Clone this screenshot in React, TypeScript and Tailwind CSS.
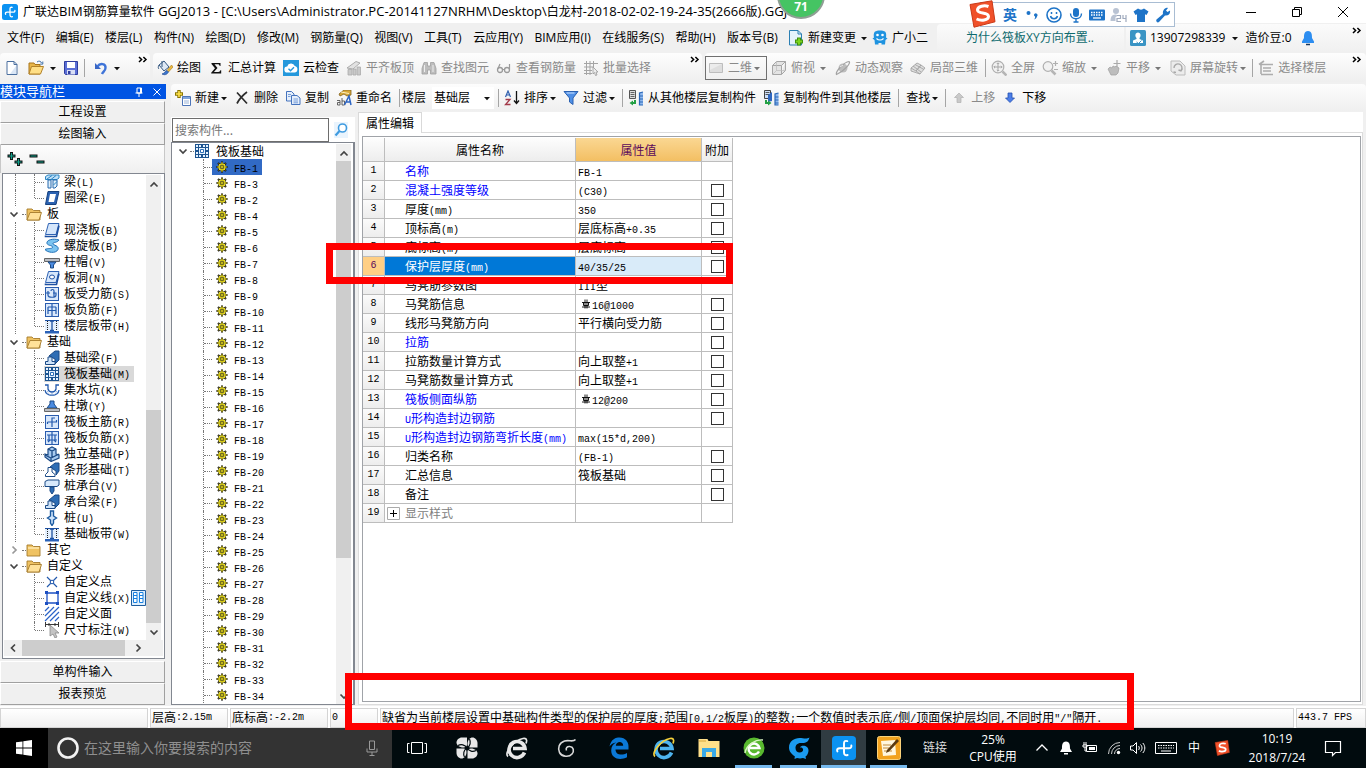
import React from 'react';
import { clsx } from 'clsx';

const UI_FONT = "font-['Open_Sans','Noto_Sans_CJK_SC',sans-serif]";
const SONG_FONT = "font-['Noto_Sans_CJK_SC',sans-serif]";

/* Song-style text: CJK at 12px, latin in half-width cells */
const Song: React.FC<{ text: string }> = ({ text }) => (
  <>
    {text.split(/([\x20-\x7e]+)/).map((part, i) =>
      i % 2 === 1 ? (
        <span key={i} className="font-['Liberation_Mono',monospace] text-[10px] leading-none whitespace-pre">
          {part}
        </span>
      ) : (
        part
      ),
    )}
  </>
);

interface GlyphProps {
  children: React.ReactNode;
  className?: string;
  box?: string;
}

const Glyph: React.FC<GlyphProps> = ({ children, className, box = '0 0 16 16' }) => (
  <svg viewBox={box} className={clsx('shrink-0', className || 'w-4 h-4')} fill="none" aria-hidden="true">
    {children}
  </svg>
);

const Caret: React.FC<{ className?: string; color?: string }> = ({ className, color = '#111' }) => (
  <Glyph box="0 0 10 16" className={clsx('h-4', className || 'w-2.5')}>
    <path d="M2 7h6L5 10.2z" fill={color} />
  </Glyph>
);

const More = () => (
  <button type="button" aria-label="更多" className="self-start pt-0.5">
    <Glyph box="0 0 10 10" className="w-2.5 h-2.5">
      <path d="M1 2l2.6 2.5L1 7M5.4 2L8 4.500 5.400 7" stroke="#000" strokeWidth="1.5" />
    </Glyph>
  </button>
);

const Sep: React.FC<{ className?: string }> = ({ className }) => (
  <span className={clsx('w-px h-[18px] bg-[#a5a5a5]', className)} />
);

const Logo: React.FC<{ className?: string }> = ({ className }) => (
  <Glyph className={className}>
    <rect width="16" height="16" rx="2.500" fill="#0b92f2" />
    <path d="M10.200 3.400C8.600 2.900 8 3.700 8 5v5.800c0 1.600.8 2.400 2.400 1.900" stroke="#fff" strokeWidth="1.300" strokeLinecap="round" />
    <path d="M12.900 6.300c.2 1.300-.5 1.900-1.700 1.900H5.200C3.600 8.200 3 9 3.600 10.300" stroke="#fff" strokeWidth="1.300" strokeLinecap="round" />
  </Glyph>
);

/* ---------- toolbar icons ---------- */
const newFile = (
  <Glyph>
    <path d="M3 1.500h7l3 3v10H3z" fill="#fff" stroke="#4b6f9f" />
    <path d="M10 1.500v3h3" stroke="#4b6f9f" />
    <path d="M12 6v8H6z" fill="#dbe7f6" />
  </Glyph>
);
const openFolder = (
  <Glyph>
    <path d="M1 3h5l1 1.500h5V14H1z" fill="#e8b64a" stroke="#a8741a" />
    <path d="M3.500 6.500H15.500L12.500 14H1z" fill="#ffdf86" stroke="#b3832a" />
    <path d="M9 2c2-1.500 4-.8 4.500 1M14.800 1.500v2.600h-2.600" stroke="#3d6fa8" />
  </Glyph>
);
const save = (
  <Glyph>
    <path d="M1.500 1.500h13v13h-12l-1-1z" fill="#5b6fd6" stroke="#2f3d9e" />
    <path d="M4 2h8v6H4z" fill="#fff" />
    <path d="M4 10h8v4.500H4z" fill="#d9dff5" />
    <path d="M5 11h2.500v3H5z" fill="#2f3d9e" />
  </Glyph>
);
const undo = (
  <Glyph>
    <path d="M2 3v6h6z" fill="#3a66c4" />
    <path d="M4.500 6.500C7 2.500 13 3.500 12.500 8c-.2 3-2.500 3.500-3.500 6" stroke="#3f74d8" strokeWidth="2.400" />
  </Glyph>
);
const paint = (
  <Glyph>
    <path d="M2 5l5-4 5 6-5 4z" fill="#dfe9f5" stroke="#33567f" />
    <path d="M5 1v6M2 5c-1 2-1 3 0 4" stroke="#33567f" />
    <path d="M14.500 5L10 10.500l1.500 1.500L16 7z" fill="#e9b93f" stroke="#a9771a" strokeWidth=".6" />
    <path d="M5 14c3 1.500 5 .5 6.500-2L10 10.500C8 11 8.500 13 5 14z" fill="#3e77cf" stroke="#244f96" strokeWidth=".7" />
  </Glyph>
);
const sigma = (
  <Glyph>
    <path d="M3.500 3h9v3h-.8c-.2-1.200-.8-1.700-2-1.700H6.500L9.500 8l-3.600 4h4.400c1.200 0 1.800-.5 2-1.700h.9V13.500h-10v-.8L7 8.300 3.500 4z" fill="#111" />
  </Glyph>
);
const cloud = (
  <Glyph>
    <rect width="16" height="16" fill="#2498dc" />
    <path d="M4.500 12.500a3 3 0 01-.3-6A4 4 0 0111.800 6a3.300 3.300 0 01-.3 6.500z" fill="#fff" />
    <path d="M5.500 8.800l2 2 3.500-3.600" stroke="#2498dc" strokeWidth="1.400" />
  </Glyph>
);
const alignTop = (
  <Glyph>
    <path d="M1 8l9-6.500 4 1.500-7 6z" fill="#e2e2e2" stroke="#a5a5a5" strokeWidth=".9" />
    <path d="M2 9.500h4V15H2zM7 9h3v6H7zM11 7h3.500v8H11z" fill="#c9c9c9" stroke="#ababab" strokeWidth=".8" />
  </Glyph>
);
const binoculars = (
  <Glyph>
    <path d="M3 2.500h3.500V6h3V2.500H13l2 6V14H9.500v-4h-3v4H1V8.500z" fill="#bdbdbd" stroke="#a0a0a0" strokeWidth=".8" />
    <path d="M3.500 5v7M12 5v7" stroke="#eee" />
  </Glyph>
);
const glasses = (
  <Glyph>
    <circle cx="4" cy="10" r="2.500" stroke="#9a9a9a" strokeWidth="1.300" />
    <circle cx="11" cy="10" r="2.500" stroke="#9a9a9a" strokeWidth="1.300" />
    <path d="M6.500 9.500h2M2 8.500L4 4M13.500 9.500V4" stroke="#9a9a9a" strokeWidth="1.200" />
  </Glyph>
);
const batch = (
  <Glyph>
    <path d="M1 3.500h14M1 7h9M1 10.500h8M1 13.500h8M3.500 1v14M7 1v14M10.500 1v6" stroke="#a5a5a5" />
    <path d="M10 7l5 5h-2l1 3-1.500.5-1-3L10 14z" fill="#eee" stroke="#999" strokeWidth=".8" />
  </Glyph>
);
const flat = (
  <Glyph>
    <path d="M1.500 3.500h13v9h-13z" fill="#dedede" stroke="#bdbdbd" />
    <path d="M2 4h12L2 10z" fill="#ececec" />
  </Glyph>
);
const cube = (
  <Glyph>
    <path d="M1.500 5.500h9v9h-9zM1.500 5.500l4-4h9l-4 4M14.500 1.500v9l-4 4" fill="#e4e4e4" stroke="#a6a6a6" />
    <path d="M5.500 1.500v9h9M1.500 14.500l4-4" stroke="#bcbcbc" strokeWidth=".7" />
  </Glyph>
);
const orbit = (
  <Glyph>
    <circle cx="8" cy="8" r="4.500" fill="#bdbdbd" />
    <path d="M1.500 14.500C0 12 9 2 14 1.500c2.500 1-4 9-12.500 13z" stroke="#a2a2a2" strokeWidth="1.200" />
    <path d="M5 7l3-2" stroke="#eee" />
  </Glyph>
);
const local3d = (
  <Glyph>
    <path d="M1 8l6-5 4 2-5 6zM6 11l5-6 4 3-5 6zM3 6l8 6M5 4.500l9 5M1 8v3l9 3" fill="#dedede" stroke="#a5a5a5" strokeWidth=".9" />
  </Glyph>
);
const fullView = (
  <Glyph>
    <circle cx="7" cy="7" r="5.800" fill="#f2f2f2" stroke="#b0b0b0" strokeWidth="1.200" />
    <path d="M7 3v8M3 7h8M5.800 4L7 2.800 8.200 4M5.800 10L7 11.200 8.200 10M4 5.800L2.800 7 4 8.200M10 5.800L11.200 7 10 8.200" stroke="#a5a5a5" />
    <path d="M11.500 11.500l4 4" stroke="#b5b5b5" strokeWidth="2.500" />
  </Glyph>
);
const zoomGlyph = (
  <Glyph>
    <circle cx="6" cy="6.500" r="4.800" fill="#f2f2f2" stroke="#b0b0b0" strokeWidth="1.200" />
    <path d="M9.500 10.500l4 4" stroke="#b5b5b5" strokeWidth="2.500" />
    <path d="M11 3.500h5M13.500 1v5M12 9.500h4" stroke="#b0b0b0" strokeWidth="1.200" />
  </Glyph>
);
const pan = (
  <Glyph>
    <path d="M2 9l2-2 2 1 1-2 2 1 1-1 3 2-1 5-2 2H5z" fill="#bdbdbd" stroke="#9e9e9e" strokeWidth=".7" />
    <path d="M11 0v7M7.500 3.500h7" stroke="#aaa" strokeWidth="1.200" />
  </Glyph>
);
const rotate = (
  <Glyph>
    <path d="M1 5V1h9l5 5v9H6l-5-4z" fill="#ececec" stroke="#bcbcbc" />
    <path d="M4 8a4 4 0 117 2.500M12.500 8.500L11 11l-2.500-1M3.500 12l2.500.5" stroke="#a8a8a8" strokeWidth="1.400" />
  </Glyph>
);
const pickFloor = (
  <Glyph>
    <path d="M1 4.500l5-3.500M2 4.500h13M5 8h8M5 11h8M3 14.500h12M3 5v9" stroke="#adadad" strokeWidth="1.600" />
  </Glyph>
);
const addNew = (
  <Glyph>
    <path d="M4 0v8M0 4h8" stroke="#8a7500" strokeWidth="3.400" />
    <path d="M4 1v6M1 4h6" stroke="#ffe24a" strokeWidth="1.600" />
    <path d="M7.500 6.500h8v9h-8z" fill="#fff" stroke="#4c74b8" />
    <path d="M8 7h7v2H8z" fill="#7fa4dc" />
    <path d="M9 11h5M9 13h5" stroke="#9ab3d8" />
  </Glyph>
);
const remove = (
  <Glyph>
    <path d="M3 2.500l10 11M13 2C9 5 5 9.500 3 13.500" stroke="#2c2c2c" strokeWidth="1.700" />
  </Glyph>
);
const copy = (
  <Glyph>
    <path d="M1.500 1.500h5l2.500 2.500v7H1.500z" fill="#e6effb" stroke="#4573bd" />
    <path d="M6.500 5.500h5.500l3 2.500v6.500H6.500z" fill="#e6effb" stroke="#4573bd" />
    <path d="M3 4.500h3M3 6.500h2.500M8.500 9h4.500M8.500 11h4.500M8.500 12.800h4.500" stroke="#6c95d6" strokeWidth=".9" />
  </Glyph>
);
const rename = (
  <Glyph>
    <path d="M3 4l5-4h7v5l-4 1-3-2-4 2z" fill="#d9a93a" stroke="#80601c" strokeWidth=".8" />
    <path d="M5 2l8 1.500" stroke="#fff2bf" />
    <path d="M1 10.500h3V15M4 12.500H1.500V15H4M6 8v7h2.500v-4H6" stroke="#555" strokeWidth=".9" />
    <path d="M8.500 15L13 6l2 9M10.500 12h4.500" stroke="#2e66c4" strokeWidth="1.500" />
  </Glyph>
);
const sortAz = (
  <Glyph>
    <path d="M1.500 7L4 1l2.500 6M2.500 5h3" stroke="#2f5fae" strokeWidth="1.200" />
    <path d="M1.500 9.500H6L1.500 14.500H6.500" stroke="#a33a4a" strokeWidth="1.300" />
    <path d="M12.500 1v12M10 10.500l2.500 3 2.500-3" stroke="#111" strokeWidth="1.300" />
  </Glyph>
);
const filter = (
  <Glyph>
    <path d="M1 1.500h14L10 8v6.500L6.500 12V8z" fill="#4e8fe6" stroke="#2a60b0" />
    <path d="M3.500 3h8" stroke="#c9e0ff" />
  </Glyph>
);
const copyFrom = (
  <Glyph>
    <path d="M1.500.5h6v8h-6z" fill="#ddd" stroke="#555" />
    <path d="M2.500 2.500h4M2.500 4.500h4M2.500 6.500h4" stroke="#555" strokeWidth=".9" />
    <path d="M15 2l-3.500 1v12H15M11.500 6H15M11.500 9H15M11.500 12H15" fill="#8fb8ee" stroke="#2b68b8" strokeWidth="1.200" />
    <path d="M8 10v4H5v1.500L1.500 13 5 10.500V12h1v-2z" fill="#23a045" />
  </Glyph>
);
const copyTo = (
  <Glyph>
    <path d="M1.500.5h6v8h-6z" fill="#cfe0f8" stroke="#444" />
    <path d="M2.500 2.500h4M2.500 4.500h4" stroke="#444" strokeWidth=".9" />
    <path d="M5 5l4-3v9l-4 1z" fill="#2f66bf" />
    <path d="M15.500 3l-3.500 1v11h3.500M12 7h3.500M12 10h3.500M12 13h3.500" fill="#8fb8ee" stroke="#2b68b8" strokeWidth="1.200" />
    <path d="M2 10v4h3v1.500L8.500 13 5 10.500V12H4v-2z" fill="#23a045" />
  </Glyph>
);
const moveUp = (
  <Glyph>
    <path d="M8 3l4.500 4.500H10V12.500H6V7.500H3.500z" fill="#c9c9c9" stroke="#b0b0b0" strokeWidth=".7" />
  </Glyph>
);
const moveDown = (
  <Glyph>
    <path d="M8 12.500L3.500 8H6V3h4v5h2.500z" fill="#4c7ee8" stroke="#2450b0" strokeWidth=".8" />
  </Glyph>
);
const change = (
  <Glyph>
    <path d="M1.500.5H10l3.500 3.500v11h-12z" fill="#e4f3fc" stroke="#2b7fb3" />
    <path d="M10 .5V4h3.500" stroke="#2b7fb3" />
    <path d="M11 7.500v8M7 11.500h8" stroke="#3f8f10" strokeWidth="4" />
    <path d="M11 8.500v6M8 11.500h6" stroke="#7bd51e" strokeWidth="2" />
  </Glyph>
);
const mascot = (
  <Glyph>
    <path d="M3 1.500C5 0 11 0 13 1.500c1.500 1.500 1.300 4 1 6l1.500 1-2 1.500-.5 4.500H9.500V13h-3v1.500H3L2.500 10l-2-1.500 1.500-1c-.5-2-.5-4.500 1-6z" fill="#1f93e0" />
    <circle cx="5.500" cy="5" r="1.300" fill="#fff" />
    <circle cx="10.500" cy="5" r="1.300" fill="#fff" />
    <path d="M4.500 8.500c2 2 5 2 7 0" stroke="#fff" strokeWidth="1.200" />
  </Glyph>
);

/* ---------- bars ---------- */
interface ToolProps {
  icon?: React.ReactNode;
  label: string;
  off?: boolean;
  drop?: boolean;
  className?: string;
}

const Tool: React.FC<ToolProps> = ({ icon, label, off, drop, className }) => (
  <button
    type="button"
    className={clsx('flex items-center shrink-0 whitespace-nowrap', off ? 'text-[#8a8a8a]' : 'text-black', className)}
  >
    {icon && <span className="mr-1">{icon}</span>}
    {label}
    {drop && <Caret color={off ? '#777' : '#111'} />}
  </button>
);

const MENUS = [
  '文件(F)', '编辑(E)', '楼层(L)', '构件(N)', '绘图(D)', '修改(M)', '钢筋量(Q)', '视图(V)',
  '工具(T)', '云应用(Y)', 'BIM应用(I)', '在线服务(S)', '帮助(H)', '版本号(B)',
];

const TitleBar = () => (
  <header className="flex items-center h-[23px] shrink-0 bg-white pl-0.5">
    <Logo className="w-4 h-4" />
    <h1 className="ml-[5px] flex-1 text-[12px] whitespace-nowrap [&>span]:text-[13px]">
      广联达<span>BIM</span>钢筋算量软件
      <span> GGJ2013 - [C:\Users\Administrator.PC-20141127NRHM\Desktop\</span>白龙村
      <span>-2018-02-02-19-24-35(2666</span>版<span>).GGJ12]</span>
    </h1>
    <button type="button" aria-label="最小化" className="w-[46px] flex justify-center">
      <Glyph box="0 0 12 12" className="w-3 h-3"><path d="M1 6.500h10" stroke="#000" /></Glyph>
    </button>
    <button type="button" aria-label="还原" className="w-[46px] flex justify-center">
      <Glyph box="0 0 12 12" className="w-3 h-3"><path d="M1.500 3.500h7v7h-7zM3.500 3.500v-2h7v7h-2" stroke="#000" /></Glyph>
    </button>
    <button type="button" aria-label="关闭" className="w-[46px] flex justify-center">
      <Glyph box="0 0 12 12" className="w-3 h-3"><path d="M1 1l10 10M11 1L1 11" stroke="#000" /></Glyph>
    </button>
  </header>
);

const MenuBar = () => (
  <nav className="flex h-[30px] shrink-0">
    <div className="flex items-center w-[937px] pl-[7px]">
      <div className="flex justify-between w-[771px] mr-2.5">
        {MENUS.map((m) => (
          <button key={m} type="button" className="whitespace-nowrap">{m}</button>
        ))}
      </div>
      <Tool icon={change} label="新建变更" />
      <Caret className="w-4" />
      <Tool icon={mascot} label="广小二" />
    </div>
    <div className="flex items-center w-[187px] pl-[29px] my-px rounded bg-linear-to-b from-[#fbfbfb] to-[#f0f0f0]">
      <a href="#tip" className="text-[#0e6a6e] whitespace-nowrap">为什么筏板XY方向布置..</a>
    </div>
    <div className="flex flex-1 items-center pl-1 pr-1 ml-0.5 my-px rounded-l bg-linear-to-b from-[#fbfbfb] to-[#f0f0f0]">
      <button type="button" className="flex items-center">
        <Glyph className="w-4 h-4">
          <rect width="16" height="16" rx="1.500" fill="#3a94c4" />
          <path d="M8 2.500c3 0 3.300 4 1.500 5.500v1l3.500 1.500V13H3v-2.500L6.500 9V8C4.700 6.500 5 2.500 8 2.500z" fill="#fff" />
          <path d="M6.500 12l2 1.500 3-3" stroke="#3a94c4" />
        </Glyph>
        <span className="ml-1">13907298339</span>
        <Caret className="w-5" />
      </button>
      <span>造价豆:0</span>
      <button type="button" aria-label="通知" className="ml-2">
        <Glyph>
          <path d="M8 1C4 1 4 5 4 8l-2 3.500V13h12v-1.500L12 8c0-3 0-7-4-7z" fill="#2c8df0" />
          <path d="M6 14.500h4" stroke="#17375e" strokeWidth="1.500" />
        </Glyph>
      </button>
      <span className="flex-1" />
      <More />
    </div>
  </nav>
);

const band = 'flex items-center h-[29px] rounded bg-linear-to-b from-[#fdfdfd] to-[#efefef]';

const MainToolbar = () => (
  <div className="flex h-[31px] shrink-0 gap-[3px]">
    <div className={clsx(band, 'w-[150px] pl-1 pr-0.5 shrink-0')}>
      <button type="button" aria-label="新建">{newFile}</button>
      <button type="button" aria-label="打开" className="ml-2 flex">{openFolder}<Caret className="w-[18px]" /></button>
      <button type="button" aria-label="保存" className="ml-px">{save}</button>
      <Sep className="ml-[5px]" />
      <button type="button" aria-label="撤销" className="ml-2 flex">{undo}<Caret className="w-4" /></button>
      <span className="flex-1" />
      <More />
    </div>
    <div className={clsx(band, 'w-[549px] pl-1 pr-0.5 gap-[7px] shrink-0')}>
      <Tool icon={paint} label="绘图" />
      <Tool icon={sigma} label="汇总计算" />
      <Tool icon={cloud} label="云检查" />
      <Tool icon={alignTop} label="平齐板顶" off />
      <Tool icon={binoculars} label="查找图元" off />
      <Tool icon={glasses} label="查看钢筋量" off />
      <Tool icon={batch} label="批量选择" off />
      <span className="flex-1" />
      <More />
    </div>
    <div className={clsx(band, 'flex-1 pr-1')}>
      <Tool icon={flat} label="二维" off drop className="h-6 pl-0.5 pr-1 border border-[#707070]" />
      <Tool icon={cube} label="俯视" off className="ml-1" />
      <Caret className="w-4" color="#777" />
      <Tool icon={orbit} label="动态观察" off className="ml-1" />
      <Tool icon={local3d} label="局部三维" off className="ml-[7px]" />
      <Sep className="ml-[7px]" />
      <Tool icon={fullView} label="全屏" off className="ml-[5px]" />
      <Tool icon={zoomGlyph} label="缩放" off className="ml-[7px]" />
      <Caret className="w-4" color="#777" />
      <Tool icon={pan} label="平移" off className="ml-1" />
      <Caret className="w-4" color="#777" />
      <Tool icon={rotate} label="屏幕旋转" off drop className="ml-1" />
      <Sep className="ml-1" />
      <Tool icon={pickFloor} label="选择楼层" off className="ml-[5px]" />
      <span className="flex-1" />
      <More />
    </div>
  </div>
);

const ComponentToolbar = () => (
  <div className="flex items-center h-[27px] shrink-0 pl-1 rounded bg-linear-to-b from-[#fdfdfd] to-[#efefef]">
    <Tool icon={addNew} label="新建" drop />
    <Tool icon={remove} label="删除" className="ml-[5px]" />
    <Tool icon={copy} label="复制" className="ml-[7px]" />
    <Tool icon={rename} label="重命名" className="ml-[7px]" />
    <Sep className="ml-[7px]" />
    <label htmlFor="floor" className="ml-0.5">楼层</label>
    <div className="flex items-center h-[22px] w-[62px] ml-1.5 pl-0.5 bg-white">
      <select id="floor" className="appearance-none w-12 bg-transparent outline-none">
        <option>基础层</option>
      </select>
      <Caret />
    </div>
    <Sep className="ml-1" />
    <Tool icon={sortAz} label="排序" drop className="ml-[5px]" />
    <Tool icon={filter} label="过滤" drop className="ml-[5px]" />
    <Sep className="ml-[5px]" />
    <Tool icon={copyFrom} label="从其他楼层复制构件" className="ml-[5px]" />
    <Tool icon={copyTo} label="复制构件到其他楼层" className="ml-[7px]" />
    <Sep className="ml-[7px]" />
    <Tool label="查找" drop className="ml-[7px]" />
    <Sep className="ml-[5px]" />
    <Tool icon={moveUp} label="上移" off className="ml-[5px]" />
    <Tool icon={moveDown} label="下移" className="ml-[7px]" />
  </div>
);

/* ---------- tree icons ---------- */
const raftIcon = (
  <Glyph>
    <path d="M1 1h14v14H1z" fill="#1c5490" />
    <path d="M2 2h2v2H2zM5 2h2v2H5zM9 2h2v2H9zM12 2h2v2h-2zM2 5h2v2H2zM12 5h2v2h-2zM2 9h2v2H2zM12 9h2v2h-2zM2 12h2v2H2zM5 12h2v2H5zM9 12h2v2H9zM12 12h2v2h-2z" fill="#e6f2ff" />
    <path d="M5 5h6v6H5z" fill="#e6f2ff" />
    <path d="M6.500 6.500h3v3h-3z" fill="#fff" stroke="#2e70b8" />
  </Glyph>
);
const slab = (hole?: boolean) => (
  <Glyph>
    <path d="M4.500 1.500H15l-3 11H1.500z" fill="#d5e6fb" stroke="#2f63b4" />
    <path d="M1.500 13.500v1H12.500l2.500-11" stroke="#1d50a2" strokeWidth="1.600" />
    {hole && <ellipse cx="8" cy="7" rx="2.500" ry="2" fill="#fff" stroke="#1d50a2" />}
  </Glyph>
);
const gridRebar = (d: string) => (
  <Glyph>
    <rect x="1.500" y="1.500" width="13" height="13" fill="#d9e8fb" stroke="#2a5cae" />
    <path d={d} stroke="#2259ad" strokeWidth="1.200" />
  </Glyph>
);
const beamUp = (
  <Glyph>
    <path d="M5 6l6-5h4v9l-4 4V9z" fill="#2e6db4" stroke="#1b4a86" />
    <path d="M1.500 14.500v-3H4V7h4v4.500h3v3z" fill="#cfe4fa" stroke="#1b4a86" />
  </Glyph>
);
const strip = (
  <Glyph>
    <path d="M1 2.500h14" stroke="#1d50a2" />
    <path d="M1 3h14v9H1z" fill="#e3effd" />
    <path d="M3.500 3v10M12.500 3v10" stroke="#222" strokeDasharray="1 1" />
    <path d="M8 2v12M6 3h4M6 12.500h4" stroke="#1d50a2" strokeWidth="1.300" />
    <path d="M1 13h14v2.500H1z" fill="#2b62b8" />
  </Glyph>
);

const TREE_ICONS: Record<string, React.ReactNode> = {
  beam: (
    <Glyph>
      <path d="M1.500 2.500L4 1h11v3l-2 1.500H1.500z" fill="#bfe0f8" stroke="#2c86c4" />
      <path d="M4 6h3v8H4zM9 6h4v6l-2 2H9z" fill="#dff0fc" stroke="#2768ad" />
      <path d="M3 5l5-3.500M7 5.500l5-4M9.500 11l3.500-3.500" stroke="#2c86c4" />
    </Glyph>
  ),
  ring: (
    <Glyph>
      <path d="M4 1.500h11l-3 13H1.500z" fill="#2b62b2" stroke="#17427f" />
      <path d="M6 4h6l-2 8H4.500z" fill="#fff" />
    </Glyph>
  ),
  slab: slab(),
  spiral: (
    <Glyph>
      <path d="M15 2C9 0 2 2 3 5.500 4 8 9 7 8.500 9.500 8 11 4 10 1 11.500c2 3 11 4.500 13 0C15.500 7.500 9 7.500 9 5.500 9 4 13 5 15 2z" fill="#7cc4f0" stroke="#2271b8" />
    </Glyph>
  ),
  cap: (
    <Glyph>
      <path d="M.5 4.500h15v3H.5z" fill="#b9bdc4" stroke="#666" />
      <path d="M4 8h8l-2.500 3v3h-3v-3z" fill="#4b8be0" stroke="#1b4a86" />
    </Glyph>
  ),
  hole: slab(true),
  force: gridRebar('M2 7h4M4 5v4c0 3 8 3 8 0V7h-3M7 5c0-2 3-2 3 0v6'),
  negative: gridRebar('M4 5h8M4 8.500h8M4 5v7M12 5v7M8 2v12'),
  strip,
  footBeam: beamUp,
  raft: raftIcon,
  pit: (
    <Glyph>
      <path d="M1 3h3v4c1 4 7 4 8 0V3h3M1 8c1 7 13 7 14 0" stroke="#2259ad" strokeWidth="1.300" />
      <path d="M3 9l2 3M8 11v3M13 9l-2 3" stroke="#7ba4dc" strokeDasharray="1 1" />
    </Glyph>
  ),
  pier: (
    <Glyph>
      <path d="M6 3h4v3l3 4H3l3-4z" fill="#4b8be0" stroke="#1b4a86" />
      <path d="M.5 10.500h15v3H.5z" fill="#b9bdc4" stroke="#666" />
    </Glyph>
  ),
  mainBar: gridRebar('M3.500 8h9V6M3.500 8v2M8 13V4h3'),
  negBar: gridRebar('M3 5h10M3 10h10M8 2v12M5 5v5M11 5v5M4 12l2-2M12 12l-2-2'),
  single: (
    <Glyph>
      <path d="M1 8l3 1V3l4-2 4 2v5l3 1v3l-8 3.500L1 11z" fill="#a9cbf0" stroke="#1b4a86" strokeWidth="1.200" />
      <path d="M4 3l4 2 4-2M8 5v6M1 9l6 3 8-4M7 12v3" stroke="#1b4a86" strokeWidth="1.300" />
    </Glyph>
  ),
  stripFoot: (
    <Glyph>
      <path d="M6 5l5-4h4v8l-3 4V9z" fill="#2e6db4" stroke="#1b4a86" />
      <path d="M1.500 14.500v-2L4 10V5.500h4V10l3 2.500v2z" fill="#fff" stroke="#1b4a86" />
    </Glyph>
  ),
  pileCap: (
    <Glyph>
      <path d="M1 3.500L4 2h11v5l-2 1.500H1z" fill="#d7e9fb" stroke="#1b4a86" />
      <path d="M6 9h4v4l-2 3-2-3z" fill="#2e6db4" stroke="#1b4a86" />
    </Glyph>
  ),
  pile: (
    <Glyph>
      <path d="M6.500 1h3v5l3 2-3 2v3L8 15.500 6.500 13v-3l-3-2 3-2z" fill="#cfe4fa" stroke="#1b5aa0" strokeWidth="1.400" />
    </Glyph>
  ),
  point: (
    <Glyph>
      <path d="M3 3l10 10M13 3L3 13" stroke="#2259ad" strokeWidth="1.200" />
      <circle cx="8" cy="8" r="1.800" fill="#fff" stroke="#2259ad" />
    </Glyph>
  ),
  line: (
    <Glyph>
      <path d="M3 3h11v10H3z" stroke="#1d50c2" strokeWidth="1.300" />
      <path d="M1 1h3v3H1zM12 1h3v3h-3zM1 12h3v3H1zM12 12h3v3h-3z" fill="#1d50c2" />
    </Glyph>
  ),
  face: (
    <Glyph>
      <path d="M1 5l4-4M1 10l9-9M1 15L15 1M6 15l9-9M11 15l4-4" stroke="#2a62c8" strokeWidth="1.200" />
    </Glyph>
  ),
  dim: (
    <Glyph>
      <path d="M1.500 0v5M14.500 0v5M2 2.500h12M5 1v3M11 1v3" stroke="#222" strokeWidth=".9" />
      <path d="M6 3v11l3-2 2 4 2-1-2-4h4z" fill="#c4c4c4" stroke="#8a8a8a" strokeWidth=".8" />
    </Glyph>
  ),
};

const FolderIcon: React.FC<{ open?: boolean }> = ({ open }) => (
  <Glyph>
    <path d="M1 3h5l1.500 1.500H14V14H1z" fill="#efc262" stroke="#a57a2b" strokeWidth=".9" />
    {open && <path d="M4 6.500h11.500L13 14H1z" fill="#ffe199" stroke="#a57a2b" strokeWidth=".9" />}
    {!open && <path d="M2 6h11" stroke="#ffe9b0" strokeWidth="1.500" />}
  </Glyph>
);

interface NavNode {
  label: string;
  icon?: string;
  folder?: boolean;
  open?: boolean;
  tail?: boolean; // no guide line at the outer level
  last?: boolean;
}

const NAV: NavNode[] = [
  { label: '梁(L)', icon: 'beam' },
  { label: '圈梁(E)', icon: 'ring', last: true },
  { label: '板', folder: true, open: true },
  { label: '现浇板(B)', icon: 'slab' },
  { label: '螺旋板(B)', icon: 'spiral' },
  { label: '柱帽(V)', icon: 'cap' },
  { label: '板洞(N)', icon: 'hole' },
  { label: '板受力筋(S)', icon: 'force' },
  { label: '板负筋(F)', icon: 'negative' },
  { label: '楼层板带(H)', icon: 'strip', last: true },
  { label: '基础', folder: true, open: true },
  { label: '基础梁(F)', icon: 'footBeam' },
  { label: '筏板基础(M)', icon: 'raft' },
  { label: '集水坑(K)', icon: 'pit' },
  { label: '柱墩(Y)', icon: 'pier' },
  { label: '筏板主筋(R)', icon: 'mainBar' },
  { label: '筏板负筋(X)', icon: 'negBar' },
  { label: '独立基础(P)', icon: 'single' },
  { label: '条形基础(T)', icon: 'stripFoot' },
  { label: '桩承台(V)', icon: 'pileCap' },
  { label: '承台梁(F)', icon: 'footBeam' },
  { label: '桩(U)', icon: 'pile' },
  { label: '基础板带(W)', icon: 'strip', last: true },
  { label: '其它', folder: true },
  { label: '自定义', folder: true, open: true },
  { label: '自定义点', icon: 'point', tail: true },
  { label: '自定义线(X)', icon: 'line', tail: true },
  { label: '自定义面', icon: 'face', tail: true },
  { label: '尺寸标注(W)', icon: 'dim', tail: true, last: true },
];

const Chevron: React.FC<{ dir: 'up' | 'down' | 'left' | 'right'; color?: string }> = ({ dir, color = '#444' }) => {
  const d = {
    up: 'M1.500 7.500L5 4l3.500 3.500',
    down: 'M1.500 3.500L5 7l3.500-3.500',
    left: 'M7 1.500L3.500 5 7 8.500',
    right: 'M3.500 1.500L7 5 3.500 8.500',
  }[dir];
  return (
    <Glyph box="0 0 10 10" className="w-2.5 h-2.5">
      <path d={d} stroke={color} strokeWidth="1.700" />
    </Glyph>
  );
};

const NavRow: React.FC<{ node: NavNode }> = ({ node }) => {
  if (node.folder) {
    return (
      <li className="flex items-center h-4 pl-[5px]">
        <Chevron dir={node.open ? 'down' : 'right'} color={node.open ? '#444' : '#999'} />
        <span className="w-1 ml-[3px] border-t border-dotted border-[#777]" />
        <FolderIcon open={node.open} />
        <span className="ml-[5px]"><Song text={node.label} /></span>
      </li>
    );
  }
  const selected = node.icon === 'raft';
  return (
    <li className="flex h-4 pl-[11px]">
      <span className={clsx('w-[19px] border-l border-dotted', node.tail ? 'border-transparent' : 'border-[#777]')} />
      <span className={clsx('border-l border-dotted border-[#777]', node.last ? 'h-2' : 'h-4')} />
      <span className="w-[9px] mt-2 border-t border-dotted border-[#777]" />
      <span className={clsx('flex items-center whitespace-nowrap', selected && 'bg-[#d9d9d9] pr-1')}>
        {TREE_ICONS[node.icon!]}
        <span className="ml-1"><Song text={node.label} /></span>
        {node.icon === 'line' && (
          <Glyph className="w-4 h-4">
            <path d="M1.500.5h14v15h-14z" fill="#dff0ff" stroke="#1f5e9e" />
            <path d="M3.500 2.500h3.500v10H3.500zM9.500 2.500H13v10H9.500z" fill="#fff" stroke="#1880e0" />
            <path d="M4 5.500h3M4 8.500h3M10 5.500h3M10 8.500h3" stroke="#1880e0" />
          </Glyph>
        )}
      </span>
    </li>
  );
};

const panelButton =
  'h-[22px] w-full shrink-0 bg-[#f0f0f0] border border-t-white border-l-white border-r-[#a0a0a0] border-b-[#a0a0a0] leading-5';

const ModuleNav = () => (
  <aside className="flex flex-col w-[166px] shrink-0 pb-px">
    <div className="flex items-center h-[15px] mb-0.5 bg-[#0054e3] text-white">
      <h2 className="flex-1 text-[13px] leading-[15px]">模块导航栏</h2>
      <button type="button" aria-label="固定" className="mr-2">
        <Glyph box="0 0 10 10" className="w-2.5 h-2.5">
          <path d="M3 1h4.500v5H3zM1.500 6h7M5 6v4M6.500 1v5" stroke="#fff" />
        </Glyph>
      </button>
      <button type="button" aria-label="关闭导航栏" className="mr-1">
        <Glyph box="0 0 10 10" className="w-2.5 h-2.5">
          <path d="M1.500 1.500l7 7M8.500 1.500l-7 7" stroke="#fff" />
        </Glyph>
      </button>
    </div>
    <div className="flex flex-col flex-1 min-h-0 pr-px">
      <button type="button" className={panelButton}>工程设置</button>
      <button type="button" className={panelButton}>绘图输入</button>
      <div className="flex items-center h-7 shrink-0 pl-1.5 gap-1.5 border-x border-[#c8c8c8] bg-linear-to-b from-[#fdfdfd] to-[#efefef]">
        <button type="button" aria-label="全部展开">
          <Glyph>
            <path d="M4.500 1v8M.5 5h8M11.500 7v8M7.500 11h8" stroke="#111" strokeWidth="3" />
            <path d="M4.500 2v6M1.500 5h6M11.500 8v6M8.500 11h6" stroke="#0fa08a" strokeWidth="1.200" />
          </Glyph>
        </button>
        <button type="button" aria-label="全部折叠">
          <Glyph>
            <path d="M.5 5h8M7.500 11h8" stroke="#111" strokeWidth="3" />
            <path d="M1.500 5h6M8.500 11h6" stroke="#0fa08a" strokeWidth="1.200" />
          </Glyph>
        </button>
      </div>
      <div className="flex flex-col flex-1 min-h-0 ml-0.5 mb-0.5 bg-white border border-[#828790]">
        <div className="flex flex-1 min-h-0">
          <ul className="flex-1 min-w-0 overflow-hidden pl-px">
            {NAV.map((n) => (
              <NavRow key={n.label} node={n} />
            ))}
          </ul>
          <div className="flex flex-col items-center w-[15px] mr-[3px] mt-px bg-[#f0f0f0]">
            <span className="h-[17px] flex items-center"><Chevron dir="up" /></span>
            <span className="flex-1" />
            <span className="h-[213px] w-full bg-[#cdcdcd]" />
            <span className="h-[17px] flex items-center"><Chevron dir="down" /></span>
          </div>
        </div>
        <div className="flex items-center h-4 mx-px mb-0.5 pr-[20px] bg-[#f0f0f0]">
          <span className="w-[18px] flex justify-center"><Chevron dir="left" /></span>
          <span className="flex-1 h-4 mr-2 bg-[#cdcdcd]" />
          <Chevron dir="right" />
        </div>
      </div>
      <button type="button" className={panelButton}>单构件输入</button>
      <button type="button" className={panelButton}>报表预览</button>
    </div>
  </aside>
);

const COMPONENTS = [
  'FB-1', 'FB-3', 'FB-2',
  ...Array.from({ length: 31 }, (_, i) => `FB-${i + 4}`),
];

const GearIcon = () => (
  <Glyph box="0 0 12 12" className="w-3 h-3">
    <path d="M6 .5v11M.5 6h11M2 2l8 8M10 2l-8 8" stroke="#111" strokeWidth="2" />
    <circle cx="6" cy="6" r="3.800" fill="#f5e71c" stroke="#333" strokeWidth=".6" />
    <path d="M6 1v10M1 6h10M2.700 2.700l6.600 6.600M9.300 2.700L2.700 9.300" stroke="#f5e71c" strokeWidth=".9" />
    <circle cx="6" cy="6" r="1.900" fill="#f5e71c" stroke="#222" strokeWidth=".8" />
    <path d="M5.500 5.500h1v1h-1z" fill="#222" />
  </Glyph>
);

const ComponentList = () => (
  <section className="flex flex-col w-[184px] shrink-0 pt-1.5 pb-px">
    <div className="flex items-center h-[25px] shrink-0 bg-white">
      <input
        type="text"
        aria-label="搜索构件"
        placeholder="搜索构件..."
        className="w-[157px] h-6 ml-px pl-0.5 text-[12px] border border-[#6d6d6d] bg-white placeholder:text-[#777] outline-none"
      />
      <button type="button" aria-label="搜索" className="ml-1">
        <Glyph className="w-4 h-4">
          <rect x="1" width="14" height="16" fill="#eaf4fd" />
          <circle cx="9.500" cy="6" r="4" fill="#fff" stroke="#3f9be0" strokeWidth="1.600" />
          <path d="M6.500 9L2.500 13.500" stroke="#3f9be0" strokeWidth="2.200" />
        </Glyph>
      </button>
    </div>
    <div className="flex flex-1 min-h-0 bg-white border border-r-2 border-[#828790]">
      <ul className="flex-1 min-w-0 overflow-hidden">
        <li className="flex items-center h-4 pl-1.5">
          <Chevron dir="down" />
          <span className="w-1 ml-0.5 border-t border-dotted border-[#777]" />
          {raftIcon}
          <span className="ml-1.5">筏板基础</span>
        </li>
        {COMPONENTS.map((name, i) => (
          <li key={name} className="flex h-4 pl-[31px]">
            <span className="border-l border-dotted border-[#777]" />
            <span className="w-2 mt-2 border-t border-dotted border-[#777]" />
            <span className={clsx('flex items-center pl-1 pr-1', i === 0 && 'bg-[#316ac5]')}>
              <GearIcon />
              <span className="ml-1.5"><Song text={name} /></span>
            </span>
          </li>
        ))}
      </ul>
      <div className="flex flex-col items-center w-[15px] mt-px mr-0.5 bg-[#f0f0f0]">
        <span className="h-[17px] flex items-center"><Chevron dir="up" /></span>
        <span className="h-[397px] w-full bg-[#cdcdcd]" />
        <span className="flex-1" />
        <span className="h-[17px] flex items-center"><Chevron dir="down" /></span>
      </div>
    </div>
  </section>
);

/* ---------- property grid ---------- */
interface PropRow {
  name: string;
  value?: string;
  check?: boolean;
  blue?: boolean;
  rebar?: boolean;
}

const ROWS: PropRow[] = [
  { name: '名称', value: 'FB-1', blue: true },
  { name: '混凝土强度等级', value: '(C30)', blue: true, check: true },
  { name: '厚度(mm)', value: '350', check: true },
  { name: '顶标高(m)', value: '层底标高+0.35', check: true },
  { name: '底标高(m)', value: '层底标高', check: true },
  { name: '保护层厚度(mm)', value: '40/35/25', check: true },
  { name: '马凳筋参数图', value: 'III型' },
  { name: '马凳筋信息', value: '16@1000', check: true, rebar: true },
  { name: '线形马凳筋方向', value: '平行横向受力筋', check: true },
  { name: '拉筋', blue: true, check: true },
  { name: '拉筋数量计算方式', value: '向上取整+1', check: true },
  { name: '马凳筋数量计算方式', value: '向上取整+1', check: true },
  { name: '筏板侧面纵筋', value: '12@200', blue: true, check: true, rebar: true },
  { name: 'U形构造封边钢筋', blue: true, check: true },
  { name: 'U形构造封边钢筋弯折长度(mm)', value: 'max(15*d,200)', blue: true },
  { name: '归类名称', value: '(FB-1)', check: true },
  { name: '汇总信息', value: '筏板基础', check: true },
  { name: '备注', check: true },
  { name: '显示样式' },
];

const SELECTED = 5;

const PropertyTable = () => (
  <table className="table-fixed w-[370px] border-separate border-spacing-0 leading-4">
    <colgroup>
      <col className="w-[22px]" />
      <col className="w-[191px]" />
      <col className="w-[126px]" />
      <col className="w-[31px]" />
    </colgroup>
    <thead>
      <tr className="[&>th]:h-6 [&>th]:p-0 [&>th]:font-normal [&>th]:border-r [&>th]:border-b [&>th]:border-[#bdbdbd]">
        <th className="bg-linear-to-b from-[#fdfdfd] to-[#ededed]" />
        <th className="bg-linear-to-b from-[#fdfdfd] to-[#ededed]">属性名称</th>
        <th className="bg-linear-to-b from-[#fad792] to-[#f3bf62] text-[#5b0a5b]">属性值</th>
        <th className="bg-linear-to-b from-[#fdfdfd] to-[#ededed]">附加</th>
      </tr>
    </thead>
    <tbody>
      {ROWS.map((row, i) => {
        const sel = i === SELECTED;
        const tree = i === ROWS.length - 1;
        return (
          <tr
            key={row.name}
            className="[&>td]:p-0 [&>td]:h-[19px] [&>td]:border-r [&>td]:border-b [&>td]:border-[#bdbdbd] [&>td]:whitespace-nowrap"
          >
            <td className={clsx(sel ? 'bg-[#ffcf85] text-[#5b0a5b]' : 'bg-linear-to-b from-[#fbfbfb] to-[#ededed]')}>
              <div className="flex items-center justify-center h-[18px]"><Song text={String(i + 1)} /></div>
            </td>
            <td className={clsx(sel && 'bg-[#0078d7] text-white', row.blue && 'text-[#0000ff]', tree && 'text-[#808080]')}>
              <div className="flex items-center h-[18px]">
                <span className="w-5 pl-0.5">
                  {tree && (
                    <button type="button" aria-label="展开" className="block">
                      <Glyph box="0 0 13 13" className="w-[13px] h-[13px]">
                        <path d="M.5.5h12v12H.5z" stroke="#aaa" />
                        <path d="M3 6.500h7M6.500 3v7" stroke="#000" />
                      </Glyph>
                    </button>
                  )}
                </span>
                <span><Song text={row.name} /></span>
              </div>
            </td>
            <td className={clsx(sel && 'bg-[#d9ebf9]')}>
              <div className="flex items-center h-[18px] pl-0.5">
                {row.rebar && (
                  <Glyph box="0 0 12 12" className="w-3 h-3 ml-0.5">
                    <path d="M2 4.500h8M3.500 4.500v3h5v-3M5 1.500v9M7 1.500v9M2 9h8" stroke="#000" strokeWidth=".9" />
                  </Glyph>
                )}
                <span><Song text={row.value || ''} /></span>
              </div>
            </td>
            <td>
              {row.check && (
                <input
                  type="checkbox"
                  aria-label={`附加 ${row.name}`}
                  className="appearance-none block mx-auto w-[13px] h-[13px] border border-[#333] bg-white"
                />
              )}
            </td>
          </tr>
        );
      })}
    </tbody>
  </table>
);

const PropertyPanel = () => (
  <section className="flex flex-col flex-1 min-w-0 ml-[3px] pt-px pr-[3px] pb-px">
    <div className="flex h-[21px] shrink-0 bg-white">
      <button type="button" className="w-16 px-[7px] border border-b-0 border-[#d9d9d9] bg-white">属性编辑</button>
      <span className="flex-1 border-b border-[#dcdcdc]" />
    </div>
    <div className="flex flex-1 min-h-0 pt-[3px] pl-[3px] pb-0.5 pr-px bg-white border border-t-0 border-[#dcdcdc]">
      <div className="flex-1 overflow-hidden pt-px border border-[#a0a3a8]">
        <PropertyTable />
      </div>
    </div>
  </section>
);

const statusCell = 'flex items-center h-5 pl-px border border-[#d4d4d4] bg-linear-to-b from-white to-[#f0f0f0] whitespace-nowrap';

const StatusBar = () => (
  <footer className="flex items-end h-[22px] shrink-0 gap-0.5 bg-white">
    <span className={clsx(statusCell, 'w-[148px]')} />
    <span className={clsx(statusCell, 'w-[78px]')}><Song text="层高:2.15m" /></span>
    <span className={clsx(statusCell, 'w-[98px]')}><Song text="底标高:-2.2m" /></span>
    <span className={clsx(statusCell, 'w-12')}><Song text="0" /></span>
    <span className={clsx(statusCell, 'flex-1 min-w-0')}>
      <span>
        <Song text={'缺省为当前楼层设置中基础构件类型的保护层的厚度;范围[0,1/2板厚)的整数;一个数值时表示底/侧/顶面保护层均同,不同时用"/"隔开.'} />
      </span>
    </span>
    <span className={clsx(statusCell, 'w-[70px]')}><Song text="443.7 FPS" /></span>
  </footer>
);

/* ---------- windows taskbar ---------- */
const SogouMark: React.FC<{ className: string }> = ({ className }) => (
  <Glyph box="0 0 28 28" className={className}>
    <path d="M2 4.500L24 .8l3 21-21 5.400z" fill="#f0512a" stroke="#c93a18" />
    <path d="M20.500 6.500c-4-1.500-11-.5-11 3.500 0 4.500 11 1.500 11 6.500 0 4-7.500 4.500-12 2.500" stroke="#fff" strokeWidth="3" />
  </Glyph>
);

const BrowserE: React.FC<{ color: string; ring?: string }> = ({ color, ring }) => (
  <Glyph box="0 0 24 24" className="w-6 h-6">
    <path d="M19.500 16.500A8 8 0 1120 12.500H8" stroke={color} strokeWidth="3.600" />
    {ring && <path d="M3 20.500C-1 17 9 4 18 2.500c5-.8 3.500 3.500 3 5" stroke={ring} strokeWidth="1.700" />}
  </Glyph>
);

const Swirl: React.FC<{ color: string; width: number }> = ({ color, width }) => (
  <Glyph box="0 0 24 24" className="w-6 h-6">
    <path d="M20.500 3.500C18 6.500 14 3.500 9.500 5 4 7 2.500 12 4.500 16.500c2.500 4.500 9.500 5 12.500 1.500 2.500-3 1.500-7-2-7.500-3-.5-4.500 2-3.500 4" stroke={color} strokeWidth={width} />
  </Glyph>
);

const taskButton = 'flex items-center justify-center h-full shrink-0';
const running = 'absolute bottom-0 h-[3px] bg-[#76b9ed]';

const TaskBar = () => (
  <footer className="flex items-center h-10 shrink-0 bg-[#010b0e] text-white">
    <button type="button" aria-label="开始" className="flex items-center justify-center w-12 h-full bg-black">
      <Glyph>
        <path d="M0 2.300L6.500 1.400V7.600H0zM7.300 1.300L16 0v7.600H7.300zM0 8.400h6.500v6.200L0 13.700zM7.300 8.400H16V16l-8.700-1.300z" fill="#fff" />
      </Glyph>
    </button>
    <label className="flex items-center w-[344px] h-full pl-2 pr-3 bg-[#333]">
      <Glyph box="0 0 24 24" className="w-6 h-6">
        <circle cx="12" cy="12" r="9.500" stroke="#f2f2f2" strokeWidth="2.600" />
      </Glyph>
      <input
        type="text"
        aria-label="搜索"
        placeholder="在这里输入你要搜索的内容"
        className="flex-1 min-w-0 ml-1 bg-transparent text-[14px] placeholder:text-[#8f8f8f] outline-none"
      />
      <Glyph>
        <path d="M5.500 1h5v8.500h-5zM3 8.500v3.500h10V8.500M8 12v3M5.500 15.500h5" stroke="#9a9a9a" />
      </Glyph>
    </label>
    <button type="button" aria-label="任务视图" className={clsx(taskButton, 'w-[50px]')}>
      <Glyph box="0 0 22 16" className="w-[22px] h-4">
        <path d="M5.500 2.500h11v11h-11zM3.500 3.500h-2v9h2M18.500 3.500h2v9h-2" stroke="#fff" />
      </Glyph>
    </button>
    <button type="button" aria-label="壁纸" className={clsx(taskButton, 'w-[50px]')}>
      <Glyph box="0 0 24 24" className="w-6 h-6">
        <path d="M7 1.500h5v7c0 2-1.500 3-3.500 3C4 11.500 1.500 9 1.500 6.500S4 1.500 7 1.500z" fill="#e8e8e8" />
        <path d="M22.500 7v4.500h-7c-2 0-3-1.500-3-3.500 0-4 2.500-6.500 5-6.500s5 2.500 5 5.500z" fill="#e8e8e8" />
        <path d="M1.500 17v-4.500h7c2 0 3 1.500 3 3.500 0 4-2.500 6.500-5 6.500s-5-2.500-5-5.500z" fill="#e8e8e8" />
        <path d="M17 22.500h-4.500v-7c0-2 1.500-3 3.500-3 4 0 6.500 2.500 6.500 5s-2.500 5-5.500 5z" fill="#e8e8e8" />
        <path d="M12 12C10 8.500 6 8 3 9.500M12 12c3.500-2 4-6 2.500-9M12 12c2 3.500 6 4 9 2.500M12 12c-3.500 2-4 6-2.500 9" stroke="#010b0e" strokeWidth="1.200" />
      </Glyph>
    </button>
    <button type="button" aria-label="浏览器" className={clsx(taskButton, 'w-[50px]')}>
      <BrowserE color="#e8e8e8" ring="#e8e8e8" />
    </button>
    <button type="button" aria-label="广联达" className={clsx(taskButton, 'w-[50px]')}>
      <Swirl color="#d8d8d8" width={1.6} />
    </button>
    <button type="button" aria-label="Edge" className={clsx(taskButton, 'w-[45px] ml-1')}>
      <Glyph box="0 0 24 24" className="w-6 h-6">
        <path d="M2.500 10.500C4 3 9 1.500 12.500 1.500c6 0 9 4.500 9 9v3H8.500c.2 6 7 6 11.500 3.500v4.300c-7 3.500-15.800 1.500-15.800-6.800 0-4 2-6.500 5-8-3 .3-5.200 2-6.700 4zM8.800 9.800h7.400c0-5-6.900-5-7.400 0z" fill="#0b78d6" />
      </Glyph>
    </button>
    <button type="button" aria-label="Internet Explorer" className={clsx(taskButton, 'w-[45px]')}>
      <BrowserE color="#4eb4ee" ring="#f6d23c" />
    </button>
    <button type="button" aria-label="文件资源管理器" className={clsx(taskButton, 'w-[45px]')}>
      <Glyph box="0 0 24 24" className="w-6 h-6">
        <path d="M1.500 3h9l1 2h11v16h-21z" fill="#ffe08a" />
        <path d="M2 5h7" stroke="#d8a53a" />
        <path d="M5 12h14v9h-4v-5H9v5H5z" fill="#3aa9e6" />
      </Glyph>
    </button>
    <button type="button" aria-label="360浏览器" className={clsx(taskButton, 'relative w-[45px]')}>
      <Glyph box="0 0 24 24" className="w-6 h-6">
        <circle cx="12" cy="12" r="10.500" fill="#58b82e" />
        <path d="M17 15.500a5.500 5.500 0 11.500-3.500H8" stroke="#fff" strokeWidth="2.400" />
        <path d="M3 17C4 9 14 3 21 4" stroke="#d9f3c4" strokeWidth="1.400" />
      </Glyph>
      <span className={clsx(running, 'left-1 right-1')} />
    </button>
    <button type="button" aria-label="广联达G+" className={clsx(taskButton, 'relative w-[45px]')}>
      <Glyph box="0 0 24 24" className="w-6 h-6">
        <path d="M22.500 1.500C21 7 18 7 14 7c-4 0-5.500 2.500-5.500 5 0 3 2 4.500 4 4.500 2.500 0 4-1.500 3.500-3.500-.3-1.200-1.500-1.800-3-1.500 1-3 9-2.500 8.500 3.500-.5 3-1.500 4.500-3 5.500l.5 2.500-3-1c-2 .6-4 .6-6 0l-2.500 1 .3-2.700C4.500 18 2 15.500 2 11.500 2 5.500 7 2 12.500 2c4 0 6.500 1.500 10-.5z" fill="#1a9bf0" />
      </Glyph>
      <span className={clsx(running, 'left-1 right-1')} />
    </button>
    <button type="button" aria-label="GGJ2013" className={clsx(taskButton, 'relative w-[45px] bg-[#303c42]')}>
      <Logo className="w-6 h-6" />
      <span className={clsx(running, 'left-0 right-0')} />
    </button>
    <button type="button" aria-label="记事" className={clsx(taskButton, 'relative w-[45px]')}>
      <Glyph box="0 0 24 24" className="w-6 h-6">
        <rect x=".5" y=".5" width="23" height="23" rx="2" fill="#f2a21e" stroke="#fbd27a" />
        <path d="M4 5l14-1 1 15-13 1z" fill="#fff7e0" />
        <path d="M6 9h8M6 12h6M7 15h8" stroke="#c08a3a" />
        <path d="M20 3L10 14l-1 3 3-1.500L22 5z" fill="#5b3a12" />
      </Glyph>
      <span className={clsx(running, 'left-1 right-1')} />
    </button>
    <span className="w-12 text-center text-[#ddd]">链接</span>
    <span className="w-[68px] text-center leading-[17px]">25%<br />CPU使用</span>
    <span className="flex-1" />
    <div className="flex items-center">
      <button type="button" aria-label="显示隐藏的图标" className="w-6 flex justify-center">
        <Glyph><path d="M2.500 10.500L8 5l5.500 5.500" stroke="#fff" strokeWidth="1.300" /></Glyph>
      </button>
      <span className="w-6 flex justify-center">
        <Glyph><path d="M8 1.500C4 1.500 4 5.500 4 8.500l-2 3.500h12l-2-3.500c0-3 0-7-4-7zM6 13h4v1.500H6z" fill="#fff" /></Glyph>
      </span>
      <span className="w-6 flex justify-center">
        <Glyph><path d="M4.500 5.500h10v6h-10zM2 2v3M4 2v3M1 5h4v2H1zM3 7v4h1" stroke="#fff" /><path d="M7 7h6v3H7z" fill="#fff" /></Glyph>
      </span>
      <span className="w-6 flex justify-center">
        <Glyph>
          <path d="M2.500 14A11.500 11.500 0 0114 2.500M5.500 14A8.500 8.500 0 0114 5.500M8.500 14A5.500 5.500 0 0114 8.500" stroke="#ccc" />
          <circle cx="12.500" cy="12.500" r="1.700" fill="#fff" />
        </Glyph>
      </span>
      <span className="w-6 flex justify-center">
        <Glyph><path d="M.5 6h2.500l3.500-3.500v11L3 10H.5zM8.500 6c1 1 1 3 0 4M10.500 4.500c2 2 2 5 0 7M12.800 3c2.700 3 2.700 7 0 10" stroke="#fff" /></Glyph>
      </span>
      <span className="w-8 flex justify-center">
        <Glyph box="0 0 24 16" className="w-6 h-4">
          <path d="M1.500 2.500h21v11h-21z" stroke="#fff" />
          <path d="M4 5.500h16M4 8h16" stroke="#fff" strokeDasharray="1.500 1" />
          <path d="M7 11h10" stroke="#fff" />
        </Glyph>
      </span>
      <span className="w-6 text-center">中</span>
      <span className="w-8 flex justify-center"><SogouMark className="w-4 h-4" /></span>
      <time className="w-[78px] text-center leading-[19px]">10:19<br />2018/7/24</time>
      <button type="button" aria-label="操作中心" className="w-[50px] flex justify-center pr-2 -ml-2 box-content">
        <Glyph box="0 0 18 18" className="w-[18px] h-[18px]">
          <path d="M1.500 2.500h15v11h-5l-3 3v-3h-7z" stroke="#fff" strokeWidth="1.200" />
        </Glyph>
      </button>
    </div>
  </footer>
);

/* ---------- floating things ---------- */
const ImeBar = () => (
  <div className="absolute top-0.5 left-[980px] flex items-center w-[195px] h-[25px] pl-[18px] bg-white border border-[#a9bdd3] [&>span]:flex [&>span]:justify-center [&>span]:w-[22px]">
    <span className="text-[#1e74c8] text-[14px] font-bold">英</span>
    <span>
      <Glyph><circle cx="4.500" cy="6" r="2" fill="#1e74c8" /><path d="M10 8.500a1.800 1.800 0 113 1c-.3 1.500-1.500 2.500-3 3 1-1 1.300-2 1-3z" fill="#1e74c8" /></Glyph>
    </span>
    <span>
      <Glyph>
        <circle cx="8" cy="8" r="7" stroke="#1e74c8" strokeWidth="1.600" />
        <path d="M4.500 9c1 3.500 6 3.500 7 0M5.500 5v2M10.500 5v2" stroke="#1e74c8" strokeWidth="1.500" />
      </Glyph>
    </span>
    <span>
      <Glyph>
        <rect x="5" y="1" width="6" height="9" rx="3" fill="#1e74c8" />
        <path d="M2.500 6.500c0 7 11 7 11 0M8 12v3M5.500 15h5" stroke="#1e74c8" strokeWidth="1.400" />
      </Glyph>
    </span>
    <span>
      <Glyph>
        <rect y="2.500" width="16" height="11" rx="1" fill="#1e74c8" />
        <path d="M2 5.500h12M2 8h12" stroke="#fff" strokeWidth="1.300" strokeDasharray="1.500 1" />
        <path d="M4 11h8" stroke="#fff" strokeWidth="1.300" />
      </Glyph>
    </span>
    <span>
      <Glyph className="w-[18px] h-4" box="0 0 18 16">
        <circle cx="6" cy="4" r="3" fill="#b9c3d3" />
        <path d="M.5 14c0-6 3-6.500 5.500-6.500 2 0 4 .5 5 3V14z" fill="#b9c3d3" />
        <path d="M6.500 8.500h4v3h-3.500V14.500H11M13 8v3.500h3.500M16 8v7" stroke="#fff" strokeWidth="3" />
        <path d="M6.500 8.500h4v3h-3.500V14.500H11M13 8v3.500h3.500M16 8v7" stroke="#9faabd" strokeWidth="1.200" />
      </Glyph>
    </span>
    <span>
      <Glyph><path d="M5 1.500c1.500 1.500 4.500 1.500 6 0l4.500 3-2 3.500-1.500-.8V15H4V7.200L2.500 8l-2-3.500z" fill="#1e74c8" /></Glyph>
    </span>
    <span>
      <Glyph><path d="M10 1.500c1-.8 2-.7 3-.5l-2 2.500 1.500 1.500 2.500-1.500c.5 3-1.500 5.500-5 5L4 15c-1.500 1.200-3.500-.5-2.500-2.500L8 7c-.5-2 .3-4.300 2-5.500z" fill="#1e74c8" /></Glyph>
    </span>
  </div>
);

export default function App() {
  return (
    <div className={clsx('relative flex flex-col h-screen overflow-hidden bg-[#f0f0f0] text-black text-[12px] leading-4', UI_FONT)}>
      <TitleBar />
      <MenuBar />
      <MainToolbar />
      <main className="flex flex-1 min-h-0">
        <ModuleNav />
        <div className="flex flex-col flex-1 min-w-0 ml-[5px]">
          <ComponentToolbar />
          <div className={clsx('flex flex-1 min-h-0', SONG_FONT)}>
            <ComponentList />
            <PropertyPanel />
          </div>
        </div>
      </main>
      <StatusBar />
      <TaskBar />

      <ImeBar />
      <SogouMark className="absolute top-0 left-[968px] w-7 h-7" />
      <div className="absolute -top-[29px] left-[777px] flex items-end justify-center w-12 h-12 pb-1 rounded-full bg-[#45c463] border-2 border-[#8f9f94] text-white font-bold leading-3">
        71
      </div>
      <div className="absolute left-[326px] top-[243px] w-[407px] h-[41px] border-[7px] border-[#ff0000] pointer-events-none" />
      <div className="absolute left-[345px] top-[673px] w-[789px] h-[57px] border-[7px] border-[#ff0000] pointer-events-none" />
    </div>
  );
}
